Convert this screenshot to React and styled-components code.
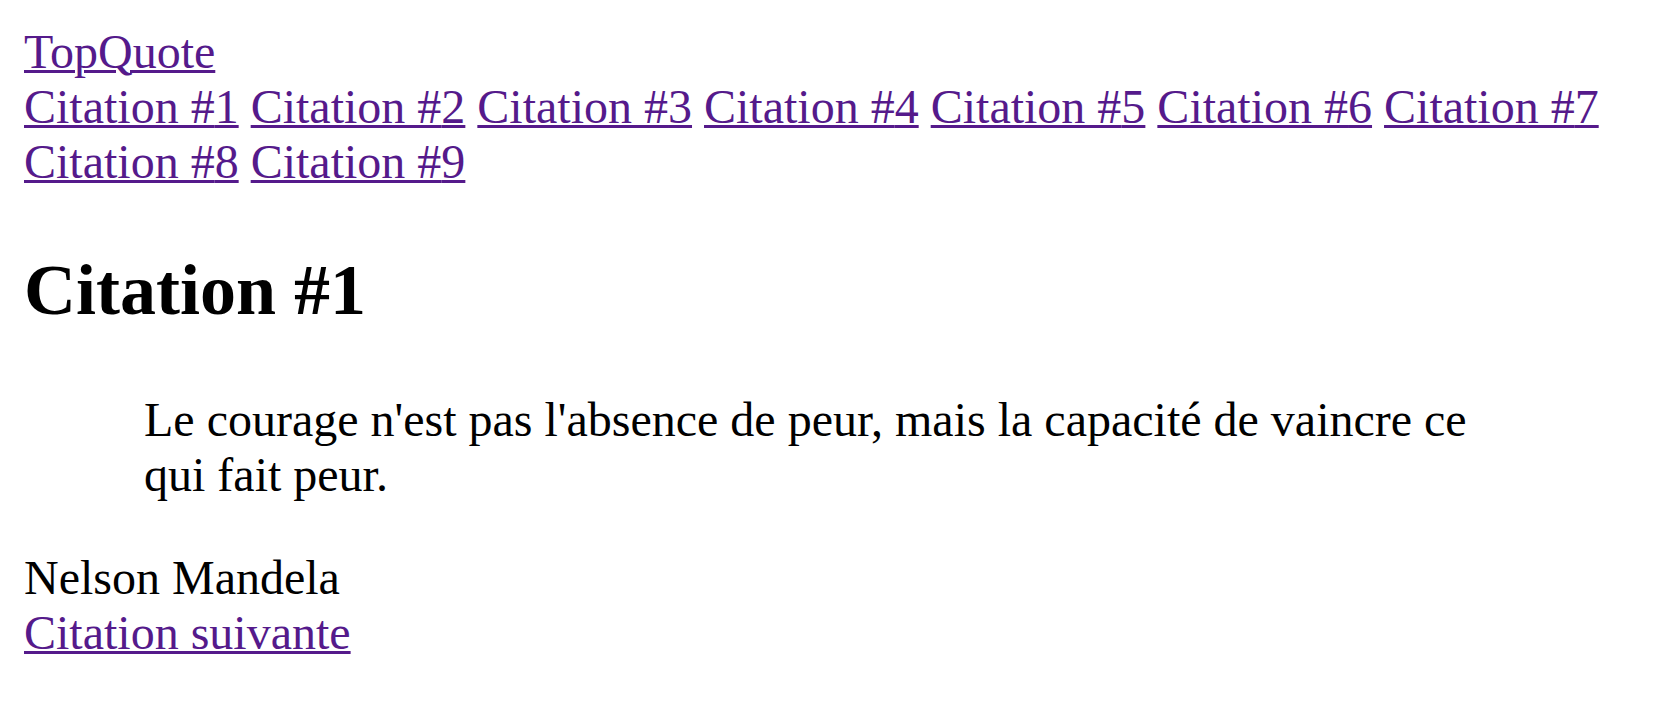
import React from "react";
import styled, { createGlobalStyle } from "styled-components";

const GlobalStyle = createGlobalStyle`
  html, body {
    background: #ffffff;
  }
  body {
    margin: 24px;
    font-family: "Liberation Serif", "Times New Roman", serif;
    font-size: 48px;
    color: #000000;
  }
`;

const Header = styled.header`
  display: block;
`;

const Brand = styled.a`
  display: block;
  width: fit-content;
  color: #551a8b;
  text-decoration: underline;
  text-decoration-thickness: 3px;
  cursor: pointer;
`;

const Nav = styled.nav`
  display: block;
`;

const NavLink = styled.a`
  color: #551a8b;
  text-decoration: underline;
  text-decoration-thickness: 3px;
  cursor: pointer;
`;

const Section = styled.section`
  display: block;
`;

const Title = styled.h1`
  font-size: 72px;
  font-weight: bold;
  margin: 59.76px 0;
`;

const Quote = styled.blockquote`
  margin: 48px 120px;
`;

const Author = styled.div`
  display: block;
`;

const NextLink = styled.a`
  color: #551a8b;
  text-decoration: underline;
  text-decoration-thickness: 3px;
  cursor: pointer;
`;

const citations = [1, 2, 3, 4, 5, 6, 7, 8, 9];

export default function App() {
  return (
    <>
      <GlobalStyle />
      <Header>
        <Brand href="#">TopQuote</Brand>
        <Nav>
          {citations.map((n, i) => (
            <React.Fragment key={n}>
              <NavLink href="#">Citation #{n}</NavLink>
              {i < citations.length - 1 ? " " : null}
            </React.Fragment>
          ))}
        </Nav>
      </Header>
      <Section>
        <Title>Citation #1</Title>
        <Quote>
          Le courage n'est pas l'absence de peur, mais la capacité de vaincre ce qui fait peur.
        </Quote>
        <Author>Nelson Mandela</Author>
        <NextLink href="#">Citation suivante</NextLink>
      </Section>
    </>
  );
}
